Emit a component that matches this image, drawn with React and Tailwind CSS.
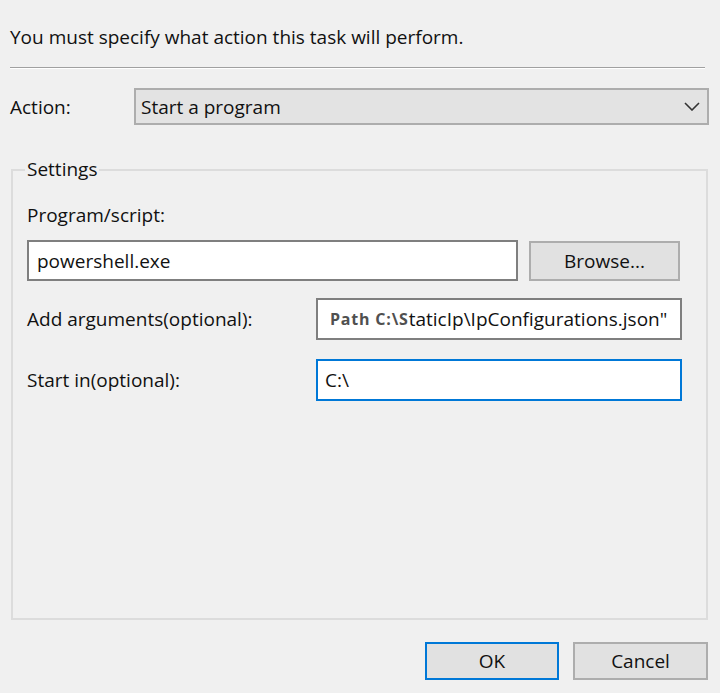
import React from "react";

const font = { fontFamily: '"Open Sans", "Noto Sans", sans-serif' };

function Btn({ children, primary, className = "" }) {
  return (
    <div
      className={
        "flex items-center justify-center bg-[#e1e1e1] border-2 text-[#111] " +
        (primary ? "border-[#0078d7] " : "border-[#adadad] ") +
        className
      }
    >
      {children}
    </div>
  );
}

export default function App() {
  return (
    <div
      className="w-[720px] h-[693px] bg-[#f0f0f0] text-[#111] text-[19px] leading-[24px] flex flex-col overflow-hidden"
      style={font}
    >
      <div className="pl-[10px] pt-[25px]">You must specify what action this task will perform.</div>
      <div className="ml-[10px] w-[695px] mt-[18px] border-t border-[#a0a0a0] border-b border-b-white" />

      <div className="flex items-center mt-[19px] pl-[10px]">
        <div className="w-[124px]">Action:</div>
        <div className="w-[575px] h-[37px] bg-[#e3e3e3] border-2 border-[#adadad] flex items-center justify-between pl-[5px] pr-[7px]">
          <span>Start a program</span>
          <svg width="16" height="9" viewBox="0 0 16 9" fill="none">
            <path d="M1 1 L8 8 L15 1" stroke="#333" strokeWidth="1.6" />
          </svg>
        </div>
      </div>

      <div className="ml-[11px] w-[697px] h-[451px] mt-[44px] border-2 border-[#dcdcdc] flex flex-col pl-[14px]">
        <div className="-mt-[14px] ml-[-2px] px-[2px] bg-[#f0f0f0] w-fit">Settings</div>

        <div className="mt-[22px]">Program/script:</div>
        <div className="flex items-center mt-[13px] gap-[11px]">
          <div className="w-[491px] h-[41px] bg-white border-2 border-[#7f7f7f] flex items-center pl-[8px]">
            powershell.exe
          </div>
          <Btn className="w-[151px] h-[40px]">Browse...</Btn>
        </div>

        <div className="flex items-center mt-[17px]">
          <div className="w-[289px]">Add arguments(optional):</div>
          <div className="w-[366px] h-[42px] bg-white border-2 border-[#7f7f7f] flex items-center pl-[12px] overflow-hidden whitespace-nowrap">
            <span className="text-[16px] font-bold text-[#505050] tracking-[0.8px]">Path C:\S</span>
            <span>taticIp\IpConfigurations.json"</span>
          </div>
        </div>

        <div className="flex items-center mt-[19px]">
          <div className="w-[289px]">Start in(optional):</div>
          <div className="w-[366px] h-[42px] bg-white border-2 border-[#0078d7] flex items-center pl-[7px]">
            C:\
          </div>
        </div>
      </div>

      <div className="flex justify-end gap-[14px] mt-[22px] pr-[12px]">
        <Btn primary className="w-[134px] h-[38px]">OK</Btn>
        <Btn className="w-[135px] h-[38px]">Cancel</Btn>
      </div>
    </div>
  );
}
